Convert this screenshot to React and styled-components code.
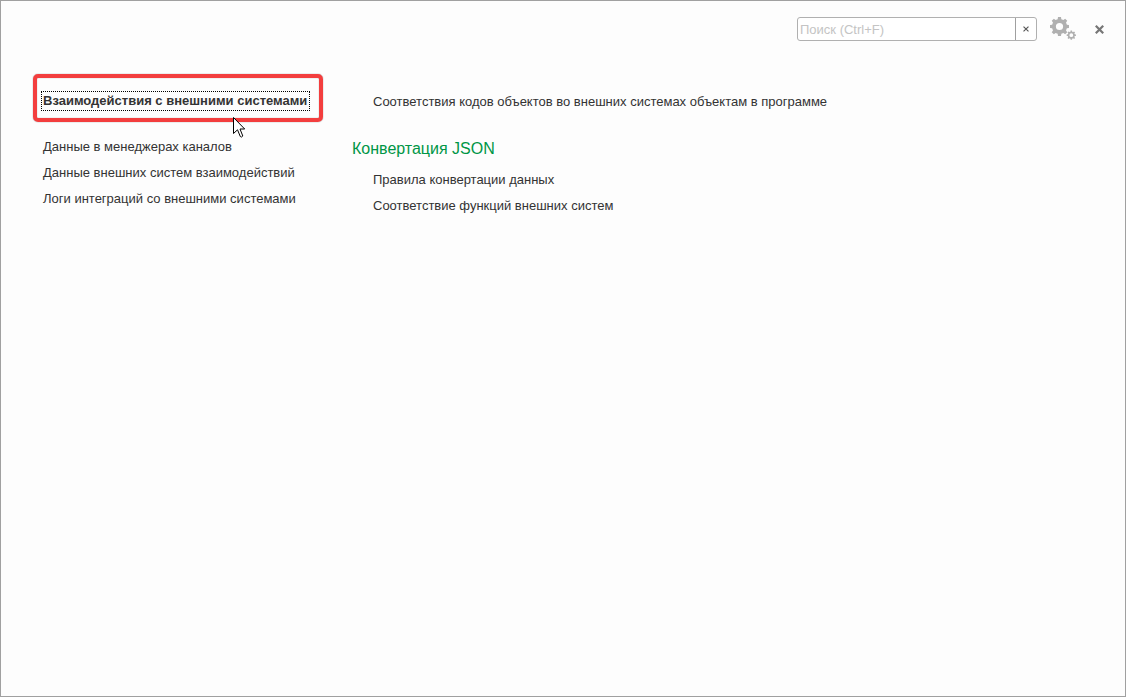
import React, { useState } from 'react';
import styled, { createGlobalStyle } from 'styled-components';

const GlobalStyle = createGlobalStyle`
    * {
        box-sizing: border-box;
    }
    body {
        margin: 0;
        background-color: #fdfdfd;
        color: #333;
        font-family: 'Liberation Sans', Arial, sans-serif;
        font-size: 13px;
    }
`

const Page = styled.div`
    min-height: 100vh;
    border: 1px solid #a0a0a0;
    background-color: #fdfdfd;
`
const Header = styled.header`
    display: flex;
    justify-content: flex-end;
    align-items: center;
    padding: 16px 18px 0 32px;
`
const SearchBox = styled.div`
    display: flex;
    width: 240px;
    height: 24px;
    margin-right: 12px;
    border: 1px solid #b0b0b0;
    border-radius: 3px;
    background-color: white;
`
const SearchInput = styled.input`
    flex: 1;
    min-width: 0;
    padding: 0 2px;
    border: 0;
    outline: 0;
    background: none;
    color: #333;
    font: inherit;
    &::placeholder {
        color: #c4c4c4;
        opacity: 1;
    }
`
const IconButton = styled.button`
    display: flex;
    align-items: center;
    justify-content: center;
    width: ${props => props.$width}px;
    height: 24px;
    padding: 0;
    border: 0;
    background: none;
    cursor: pointer;
`
const ClearButton = styled(IconButton)`
    height: 22px;
    border-left: 1px solid #a0a0a0;
`
const CloseButton = styled(IconButton)`
    margin-left: 14px;
`
const Content = styled.main`
    display: grid;
    grid-template-columns: 290px 1fr;
    column-gap: 29px;
    padding: 33px 32px;
`
const Highlight = styled.div`
    position: relative;
    display: flex;
    align-items: center;
    height: 48px;
    padding: 6px 4px 0;
    margin-bottom: 12px;
    border: 4px solid #f33e3e;
    border-radius: 5px;
    box-shadow: 0 0 1px #555, inset 0 0 1px #777;
`
const MainLink = styled.a`
    padding: 1px 2px 1px 1px;
    border: 1px dotted black;
    color: #333;
    font-weight: bold;
    line-height: 16px;
    text-decoration: none;
    white-space: nowrap;
`
const Pointer = styled.svg`
    position: absolute;
    left: 196px;
    top: 39px;
`
const Column = styled.div`
    padding-top: ${props => props.$top || 0}px;
`
const LinkList = styled.ul`
    margin: 0;
    padding: 0 0 0 ${props => props.$indent}px;
    list-style: none;
    a {
        color: #333;
        line-height: 26px;
        text-decoration: none;
    }
    li {
        height: 26px;
    }
`
const GroupTitle = styled.h2`
    margin: 21px 0 5px;
    color: #009646;
    font-size: 16px;
    font-weight: normal;
    line-height: 26px;
`

const dataLinks = [
    'Данные в менеджерах каналов',
    'Данные внешних систем взаимодействий',
    'Логи интеграций со внешними системами',
]
const codeLinks = ['Соответствия кодов объектов во внешних системах объектам в программе']
const jsonLinks = ['Правила конвертации данных', 'Соответствие функций внешних систем']

// eight-toothed wheel: body radius, tooth tip radius and the hole
function gearPath(cx, cy, body, tip, hole) {
    const points = [];
    for (let i = 0; i < 8; i++) {
        const a = i * 45;
        [[a - 14, body], [a - 9, tip], [a + 9, tip], [a + 14, body]].forEach(([deg, r]) => {
            const rad = deg * Math.PI / 180;
            points.push(`${(cx + r * Math.cos(rad)).toFixed(2)} ${(cy + r * Math.sin(rad)).toFixed(2)}`);
        });
    }
    return `M${points.join('L')}Z M${cx - hole} ${cy}a${hole} ${hole} 0 1 0 ${hole * 2} 0a${hole} ${hole} 0 1 0 ${-hole * 2} 0Z`;
}

const Gears = () => (
    <svg width="26" height="24" viewBox="0 0 26 24" fill="#b0b0b0" fillRule="evenodd" aria-hidden="true">
        <path d={gearPath(9.5, 9.5, 7.6, 9.6, 3.6)} />
        <path d={gearPath(21.3, 18.2, 3.6, 4.7, 1.9)} />
    </svg>
)

const Cross = ({ size, color, weight }) => (
    <svg width={size} height={size} viewBox="0 0 8 8" stroke={color} strokeWidth={weight} aria-hidden="true">
        <path d="M0.7 0.7L7.3 7.3M7.3 0.7L0.7 7.3" />
    </svg>
)

const Links = ({ items, indent }) => (
    <LinkList $indent={indent}>
        {items.map((item) => (
            <li key={item}><a href="#">{item}</a></li>
        ))}
    </LinkList>
)

function App() {
    const [query, setQuery] = useState('');

    return (
        <Page>
            <GlobalStyle />
            <Header>
                <SearchBox>
                    <SearchInput
                        type="text"
                        aria-label="Поиск"
                        placeholder="Поиск (Ctrl+F)"
                        value={query}
                        onChange={(e) => setQuery(e.target.value)}
                    />
                    <ClearButton type="button" $width={21} aria-label="Очистить" onClick={() => setQuery('')}>
                        <Cross size={6} color="#555" weight={1.5} />
                    </ClearButton>
                </SearchBox>
                <IconButton type="button" $width={28} aria-label="Настройки"><Gears /></IconButton>
                <CloseButton type="button" $width={16} aria-label="Закрыть">
                    <Cross size={9} color="#777" weight={2} />
                </CloseButton>
            </Header>

            <Content>
                <Column>
                    <Highlight>
                        <MainLink href="#">Взаимодействия с внешними системами</MainLink>
                        <Pointer width="13" height="21" viewBox="0 0 13 21" aria-hidden="true">
                            <path
                                d="M0.5 0.5V16.5L4.5 12.8L7.3 19.5Q8.5 20.8 9.8 19L7 12H11.7Z"
                                fill="white"
                                stroke="black"
                            />
                        </Pointer>
                    </Highlight>
                    <Links items={dataLinks} indent={10} />
                </Column>
                <Column $top={15}>
                    <Links items={codeLinks} indent={21} />
                    <GroupTitle>Конвертация JSON</GroupTitle>
                    <Links items={jsonLinks} indent={21} />
                </Column>
            </Content>
        </Page>
    );
}

export default App;
